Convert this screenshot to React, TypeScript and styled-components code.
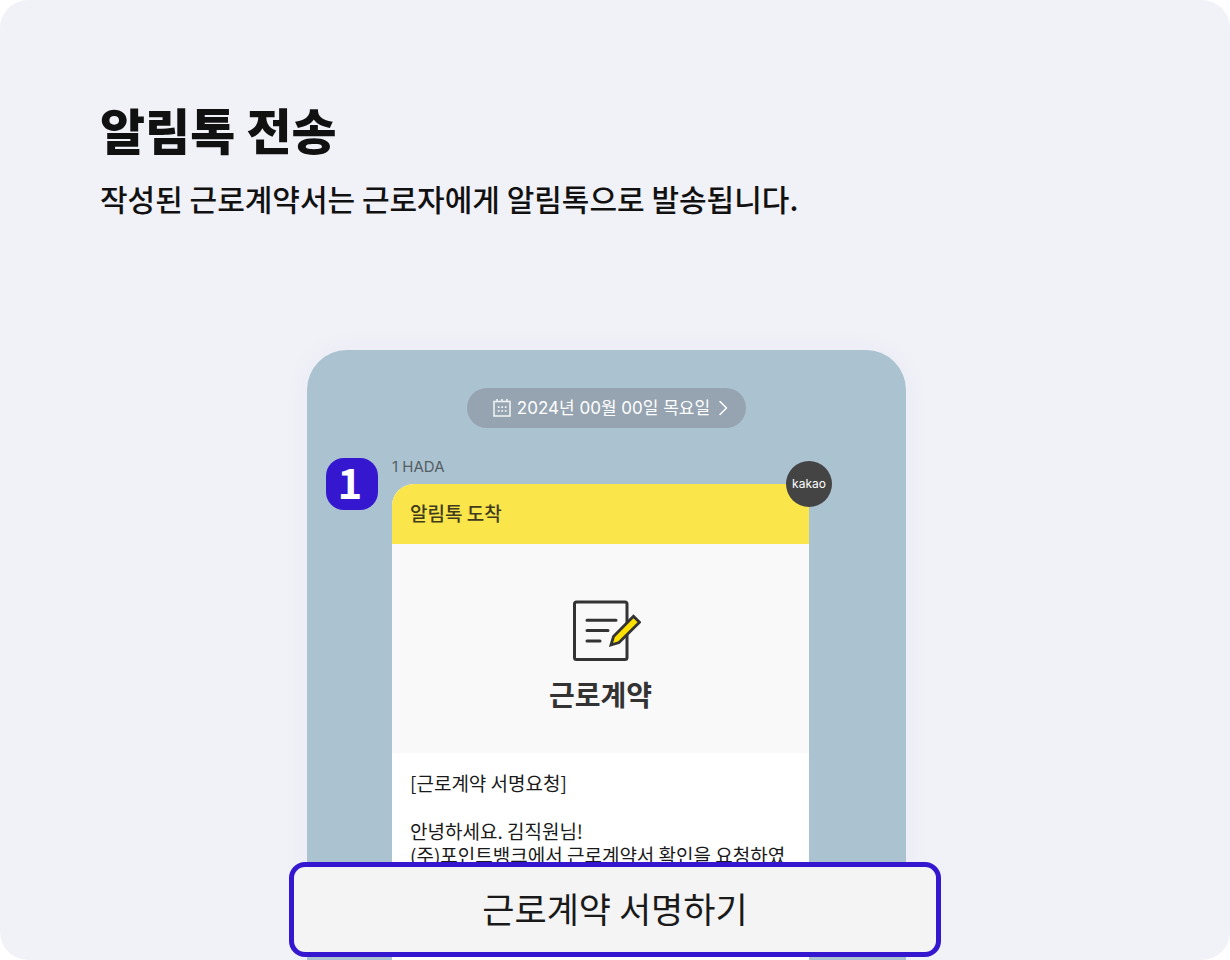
import React from "react";
import styled, { createGlobalStyle } from "styled-components";

const GlobalStyle = createGlobalStyle`
  *, *::before, *::after { box-sizing: border-box; }
  body {
    margin: 0;
    background: #ffffff;
    color: #111111;
    font-family: "Noto Sans CJK KR", sans-serif;
  }
  h1, h2, h3, p { margin: 0; }
  button { font: inherit; color: inherit; cursor: pointer; }
`;

const Page = styled.main`
  display: flex;
  flex-direction: column;
  gap: 130px;
  min-height: 100vh;
  padding-top: 91px;
  overflow: hidden;
  border-radius: 28px;
  background: #f1f2f8;
`;

const Intro = styled.header`
  padding: 0 100px;
`;

const Title = styled.h1`
  font-size: 49px;
  line-height: 76px;
  font-weight: 900;
`;

const Subtitle = styled.p`
  margin-top: 9px;
  font-size: 30px;
  line-height: 44px;
  font-weight: 500;
`;

const Stage = styled.section`
  position: relative;
  display: flex;
  flex: 1;
  width: 100%;
  max-width: 652px;
  margin: 0 auto;
  padding: 0 35px 0 18px;
`;

const Phone = styled.div`
  display: flex;
  flex: 1;
  flex-direction: column;
  gap: 30px;
  min-width: 0;
  padding: 38px 0 0;
  border-radius: 40px 40px 0 0;
  background: #abc2d0;
  box-shadow: 0 0 30px rgba(60, 50, 130, 0.04);
`;

const DateButton = styled.button`
  display: flex;
  align-items: center;
  align-self: center;
  gap: 6px;
  height: 40px;
  padding: 0 16px 0 26px;
  border: 0;
  border-radius: 20px;
  background: #96a4b1;
  color: #ffffff;
  font-family: Inter, "Noto Sans CJK KR", sans-serif;
  font-size: 17px;
  line-height: 24px;
`;

const Conversation = styled.div`
  display: flex;
  flex: 1;
  gap: 14px;
  padding: 0 97px 0 19px;
`;

const Avatar = styled.div`
  display: flex;
  flex: none;
  align-items: center;
  justify-content: center;
  width: 52px;
  height: 52px;
  padding: 0 4px 6px 0;
  border-radius: 18px;
  background: #3417cf;
  color: #ffffff;
  font-size: 42px;
  line-height: 46px;
  font-weight: 700;
`;

const Message = styled.article`
  display: flex;
  flex: 1;
  flex-direction: column;
  min-width: 0;
`;

const Sender = styled.p`
  height: 26px;
  color: #555e65;
  font-family: Inter, "Noto Sans CJK KR", sans-serif;
  font-size: 15px;
  line-height: 18px;
`;

const Card = styled.div`
  position: relative;
  display: flex;
  flex: 1;
  flex-direction: column;
  background: #ffffff;
  border-radius: 22px 0 0 0;
`;

const CardHeader = styled.h2`
  height: 60px;
  padding: 0 18px;
  border-radius: 22px 0 0 0;
  background: #fae54b;
  color: #403b1c;
  font-size: 19px;
  line-height: 58px;
  font-weight: 500;
`;

const KakaoBadge = styled.span`
  position: absolute;
  top: -23px;
  right: -23px;
  width: 46px;
  height: 46px;
  border-radius: 50%;
  background: #444444;
  color: #ffffff;
  font-family: Inter, sans-serif;
  font-size: 12px;
  line-height: 46px;
  text-align: center;
`;

const Cover = styled.div`
  display: flex;
  flex-direction: column;
  align-items: center;
  gap: 11px;
  height: 209px;
  padding-top: 55px;
  background: #f9f9f9;
  color: #333333;
`;

const CoverTitle = styled.h3`
  font-size: 28px;
  line-height: 40px;
  font-weight: 700;
`;

const Body = styled.div`
  padding: 18px;
  font-size: 19px;
  line-height: 24px;
  color: #1a1a1a;
  white-space: nowrap;

  p + p { margin-top: 24px; }
`;

const SignButton = styled.button`
  position: absolute;
  right: 0;
  bottom: 3px;
  left: 0;
  height: 95px;
  padding: 0 0 4px;
  border: 5px solid #3417cf;
  border-radius: 16px;
  background: #f4f4f4;
  color: #1a1a1a;
  font-size: 35px;
  line-height: 52px;
`;

function CalendarIcon() {
  return (
    <svg width="18" height="18" viewBox="0 0 18 18" fill="none" stroke="#eef1f4" aria-hidden="true">
      <rect x="1" y="2.5" width="16" height="14.5" strokeWidth="1.6" />
      <path d="M4 0v3M9 0v3M14 0v3" strokeWidth="1.6" />
      <path d="M4.8 8.2h8.8M4.8 11.8h8.8" strokeWidth="1.8" strokeDasharray="1.8 1.7" />
    </svg>
  );
}

function ChevronIcon() {
  return (
    <svg width="14" height="16" viewBox="0 0 14 16" fill="none" stroke="#ffffff" aria-hidden="true">
      <path d="M4 1.5l6.5 6.5L4 14.5" strokeWidth="1.5" strokeLinecap="round" strokeLinejoin="round" />
    </svg>
  );
}

function ContractIcon() {
  return (
    <svg width="80" height="64" viewBox="-10 0 80 64" fill="none" stroke="#333333" aria-hidden="true">
      <rect x="3.5" y="3" width="52.5" height="57.5" rx="2" strokeWidth="3" />
      <path d="M16 21.2h29M16 31.6h21M16 42h13" strokeWidth="3" strokeLinecap="round" />
      <path d="M62.5 17.2L68.5 23.3L48 43.5L40 46L42.5 37.5Z" fill="#ffe100" strokeWidth="2.8" />
    </svg>
  );
}

export default function App() {
  return (
    <>
      <GlobalStyle />
      <Page>
        <Intro>
          <Title>알림톡 전송</Title>
          <Subtitle>작성된 근로계약서는 근로자에게 알림톡으로 발송됩니다.</Subtitle>
        </Intro>
        <Stage>
          <Phone>
            <DateButton type="button">
              <CalendarIcon />
              <span>2024년 00월 00일 목요일</span>
              <ChevronIcon />
            </DateButton>
            <Conversation>
              <Avatar>1</Avatar>
              <Message>
                <Sender>1 HADA</Sender>
                <Card>
                  <CardHeader>알림톡 도착</CardHeader>
                  <KakaoBadge>kakao</KakaoBadge>
                  <Cover>
                    <ContractIcon />
                    <CoverTitle>근로계약</CoverTitle>
                  </Cover>
                  <Body>
                    <p>[근로계약 서명요청]</p>
                    <p>
                      안녕하세요. 김직원님!
                      <br />
                      (주)포인트뱅크에서 근로계약서 확인을 요청하였
                    </p>
                  </Body>
                </Card>
              </Message>
            </Conversation>
          </Phone>
          <SignButton type="button">근로계약 서명하기</SignButton>
        </Stage>
      </Page>
    </>
  );
}
